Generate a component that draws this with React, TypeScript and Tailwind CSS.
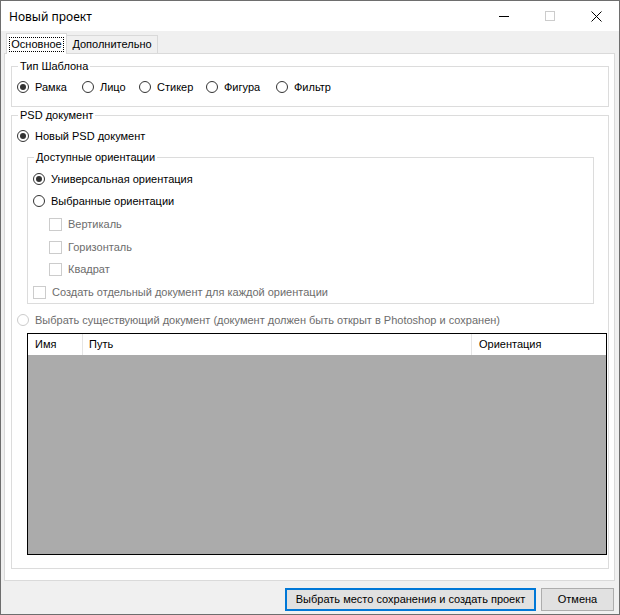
import React from 'react';

function Radio({ checked = false, disabled = false }: { checked?: boolean; disabled?: boolean }) {
    return (
        <span
            className={`flex h-[12px] w-[12px] shrink-0 items-center justify-center rounded-full border bg-white ${
                disabled ? 'border-[#cccccc]' : 'border-[#333333]'
            }`}
        >
            {checked && <span className="h-[6px] w-[6px] rounded-full bg-[#333333]" />}
        </span>
    );
}

function CheckBox() {
    return <span className="block h-[13px] w-[13px] shrink-0 border border-[#cccccc] bg-white" />;
}

function RadioOption({
    label,
    checked,
    disabled,
    className = '',
}: {
    label: string;
    checked?: boolean;
    disabled?: boolean;
    className?: string;
}) {
    return (
        <div className={`flex h-[16px] items-center gap-[6px] ${className}`}>
            <Radio checked={checked} disabled={disabled} />
            <span className={disabled ? 'text-[#6d6d6d]' : 'text-black'}>{label}</span>
        </div>
    );
}

function CheckOption({ label, className = '' }: { label: string; className?: string }) {
    return (
        <div className={`flex h-[16px] items-center gap-[6px] ${className}`}>
            <CheckBox />
            <span className="text-[#6d6d6d]">{label}</span>
        </div>
    );
}

function TitleBar() {
    return (
        <div className="flex h-[30px] items-center bg-white">
            <span className="pl-[8px] font-['Noto_Sans',sans-serif] text-[12px] text-black">Новый проект</span>
            <div className="ml-auto flex h-full">
                <div className="flex h-full w-[46px] items-center justify-center">
                    <span className="block h-px w-[10px] bg-black" />
                </div>
                <div className="flex h-full w-[46px] items-center justify-center">
                    <span className="block h-[10px] w-[10px] border border-[#cccccc]" />
                </div>
                <div className="flex h-full w-[46px] items-center justify-center">
                    <svg width="11" height="11" viewBox="0 0 11 11">
                        <path d="M0.5 0.5L10.5 10.5M10.5 0.5L0.5 10.5" stroke="#000" strokeWidth="1" />
                    </svg>
                </div>
            </div>
        </div>
    );
}

export default function App() {
    const templates = [
        { label: 'Рамка', w: 'w-[65px]', checked: true },
        { label: 'Лицо', w: 'w-[57px]' },
        { label: 'Стикер', w: 'w-[67px]' },
        { label: 'Фигура', w: 'w-[70px]' },
        { label: 'Фильтр', w: 'w-[70px]' },
    ];

    return (
        <div className="flex h-[615px] w-[620px] flex-col border border-[#6e6e6e] bg-[#f0f0f0] font-['Liberation_Sans',Arial,sans-serif] text-[11px] leading-[13px] text-black">
            <TitleBar />

            {/* tab strip */}
            <div className="flex h-[22px] items-end pl-[5px]">
                <div className="relative z-10 -mb-px flex h-[21px] w-[61px] items-center justify-center border border-b-0 border-[#d9d9d9] bg-white">
                    <span className="border border-dotted border-black px-px">Основное</span>
                </div>
                <div className="flex h-[18px] w-[91px] items-center justify-center border border-b-0 border-l-0 border-[#d9d9d9] bg-[#f0f0f0]">
                    Дополнительно
                </div>
            </div>

            {/* tab page */}
            <div className="ml-[3px] h-[528px] w-[611px] border border-[#dadada] bg-white pl-[6px]">
                <fieldset className="mt-[6px] h-[47px] w-[598px] border border-[#dcdcdc] pl-[5px]">
                    <legend className="ml-px px-[2px]">Тип Шаблона</legend>
                    <div className="mt-[6px] flex">
                        {templates.map((t) => (
                            <RadioOption key={t.label} label={t.label} checked={t.checked} className={t.w} />
                        ))}
                    </div>
                </fieldset>

                <fieldset className="mt-[2px] h-[460px] w-[598px] border border-[#dcdcdc] pl-[5px]">
                    <legend className="ml-px px-[2px]">PSD документ</legend>
                    <RadioOption label="Новый PSD документ" checked className="mt-[6px]" />

                    <fieldset className="ml-[10px] mt-[7px] h-[153px] w-[567px] border border-[#dcdcdc] pl-[5px]">
                        <legend className="ml-px px-[2px]">Доступные ориентации</legend>
                        <RadioOption label="Универсальная ориентация" checked className="mt-[7px]" />
                        <RadioOption label="Выбранные ориентации" className="mt-[6px]" />
                        <CheckOption label="Вертикаль" className="ml-[16px] mt-[7px]" />
                        <CheckOption label="Горизонталь" className="ml-[16px] mt-[7px]" />
                        <CheckOption label="Квадрат" className="ml-[16px] mt-[6px]" />
                        <CheckOption label="Создать отдельный документ для каждой ориентации" className="mt-[7px]" />
                    </fieldset>

                    <RadioOption
                        label="Выбрать существующий документ (документ должен быть открыт в Photoshop и сохранен)"
                        disabled
                        className="mt-[8px]"
                    />

                    <div className="ml-[10px] mt-[5px] flex h-[222px] w-[580px] flex-col border border-black bg-[#ababab]">
                        <div className="flex h-[21px] bg-white">
                            <div className="flex w-[55px] items-center border-r border-[#e5e5e5] pl-[7px]">Имя</div>
                            <div className="flex w-[389px] items-center border-r border-[#e5e5e5] pl-[6px]">Путь</div>
                            <div className="flex flex-1 items-center pl-[7px]">Ориентация</div>
                        </div>
                    </div>
                </fieldset>
            </div>

            {/* buttons */}
            <div className="mt-[7px] flex justify-end gap-[5px] pr-[5px]">
                <button className="flex h-[23px] w-[251px] items-center justify-center border-2 border-[#0078d7] bg-[#e1e1e1]">
                    Выбрать место сохранения и создать проект
                </button>
                <button className="flex h-[23px] w-[73px] items-center justify-center border border-[#adadad] bg-[#e1e1e1]">
                    Отмена
                </button>
            </div>
        </div>
    );
}
